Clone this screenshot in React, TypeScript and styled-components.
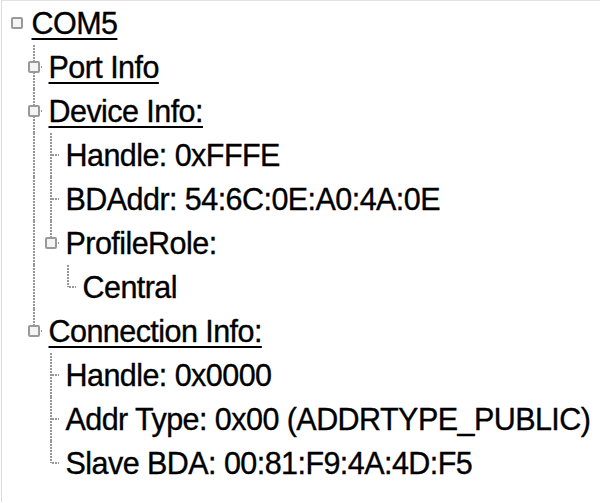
import React from "react";
import styled, { createGlobalStyle, css } from "styled-components";

type TreeNode = {
  label: string;
  link?: boolean;
  expandable?: boolean;
  children?: TreeNode[];
};

type Connector = "none" | "tee" | "elbow";

type FlatRow = {
  node: TreeNode;
  guides: boolean[];
  connector: Connector;
};

const tree: TreeNode = {
  label: "COM5",
  link: true,
  children: [
    { label: "Port Info", link: true, expandable: true },
    {
      label: "Device Info:",
      link: true,
      children: [
        { label: "Handle: 0xFFFE" },
        { label: "BDAddr: 54:6C:0E:A0:4A:0E" },
        { label: "ProfileRole:", children: [{ label: "Central" }] }
      ]
    },
    {
      label: "Connection Info:",
      link: true,
      children: [
        { label: "Handle: 0x0000" },
        { label: "Addr Type: 0x00 (ADDRTYPE_PUBLIC)" },
        { label: "Slave BDA: 00:81:F9:4A:4D:F5" }
      ]
    }
  ]
};

// guides: one flag per ancestor column, true when the line keeps running down
const flatten = (node: TreeNode, guides: boolean[], connector: Connector, out: FlatRow[]) => {
  out.push({ node, guides, connector });
  const kids = node.children || [];
  const nextGuides = [...guides, connector === "tee"];
  kids.forEach((child, index) => {
    const last = index === kids.length - 1;
    flatten(child, nextGuides, last ? "elbow" : "tee", out);
  });
  return out;
};

const GlobalStyle = createGlobalStyle`
  html, body {
    margin: 0;
    padding: 0;
    background: #ffffff;
  }
`;

const dotsDown = "repeating-linear-gradient(to bottom, #979797 0 2px, transparent 2px 3px)";
const dotsRight = "repeating-linear-gradient(to right, #979797 0 2px, transparent 2px 3px)";

const TreePane = styled.div`
  margin-left: 1px;
  min-height: 502px;
  border-top: 1px solid #e2e2e2;
  border-left: 1px solid #dadada;
  padding-left: 6.5px;
  font-family: "Liberation Sans", Arial, sans-serif;
  font-size: 30.5px;
  letter-spacing: -0.55px;
  color: #000000;
  -webkit-text-stroke: 0.35px #000000;
  box-sizing: border-box;
`;

const Row = styled.div`
  display: flex;
  align-items: center;
  height: 44px;
  white-space: nowrap;
`;

const Cell = styled.div<{ $pass?: boolean; $kind?: Connector }>`
  position: relative;
  flex: 0 0 17px;
  align-self: stretch;
  display: flex;
  align-items: center;
  justify-content: center;

  &::before {
    content: "";
    position: absolute;
    left: 7.5px;
    top: 0;
    width: 2px;
    display: none;
    background: ${dotsDown};
  }

  &::after {
    content: "";
    position: absolute;
    left: 9.5px;
    top: calc(50% - 1px);
    width: 7px;
    height: 2px;
    display: none;
    background: ${dotsRight};
  }

  ${(p) =>
    p.$pass &&
    css`
      &::before {
        display: block;
        bottom: 0;
      }
    `}

  ${(p) =>
    p.$kind === "tee" &&
    css`
      &::before {
        display: block;
        bottom: 0;
      }
      &::after {
        display: block;
      }
    `}

  ${(p) =>
    p.$kind === "elbow" &&
    css`
      &::before {
        display: block;
        height: 50%;
      }
      &::after {
        display: block;
      }
    `}
`;

const ExpandBox = styled.span`
  position: relative;
  z-index: 1;
  width: 12px;
  height: 12px;
  box-sizing: border-box;
  border: 2px solid #999999;
  border-radius: 2px;
  background: #f4f4f4;
`;

const Label = styled.span<{ $link?: boolean }>`
  padding-left: 6px;
  line-height: 34px;
  text-decoration: ${(p) => (p.$link ? "underline" : "none")};
  text-decoration-thickness: 2px;
  text-underline-offset: 4px;
`;

export default function App() {
  const rows = flatten(tree, [], "none", []);

  return (
    <>
      <GlobalStyle />
      <TreePane>
        {rows.map((row, index) => (
          <Row key={index}>
            {row.guides.map((pass, level) => (
              <Cell key={level} $pass={pass} />
            ))}
            <Cell $kind={row.connector}>
              {(row.node.children || row.node.expandable) && <ExpandBox />}
            </Cell>
            <Label $link={row.node.link}>{row.node.label}</Label>
          </Row>
        ))}
      </TreePane>
    </>
  );
}
